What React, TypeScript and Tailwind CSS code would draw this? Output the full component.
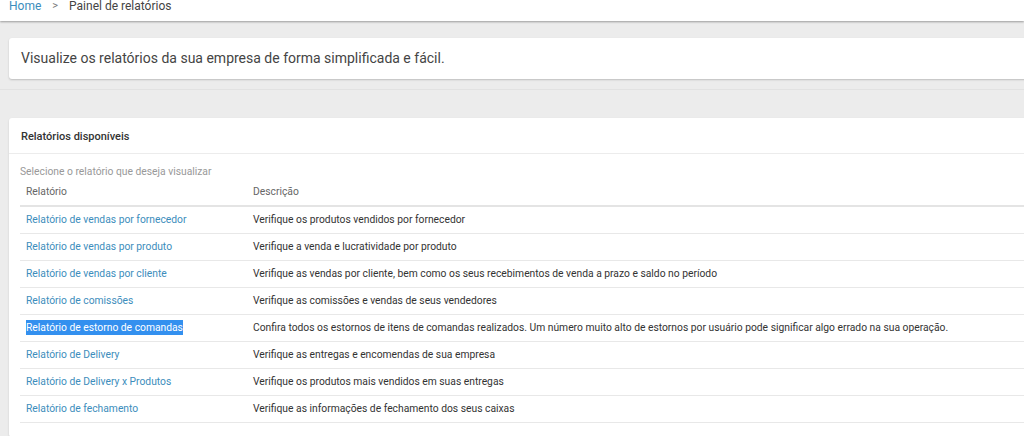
const reports = [
  { name: "Relatório de vendas por fornecedor", desc: "Verifique os produtos vendidos por fornecedor" },
  { name: "Relatório de vendas por produto", desc: "Verifique a venda e lucratividade por produto" },
  { name: "Relatório de vendas por cliente", desc: "Verifique as vendas por cliente, bem como os seus recebimentos de venda a prazo e saldo no período" },
  { name: "Relatório de comissões", desc: "Verifique as comissões e vendas de seus vendedores" },
  {
    name: "Relatório de estorno de comandas",
    desc: "Confira todos os estornos de itens de comandas realizados. Um número muito alto de estornos por usuário pode significar algo errado na sua operação.",
    selected: true,
  },
  { name: "Relatório de Delivery", desc: "Verifique as entregas e encomendas de sua empresa" },
  { name: "Relatório de Delivery x Produtos", desc: "Verifique os produtos mais vendidos em suas entregas" },
  { name: "Relatório de fechamento", desc: "Verifique as informações de fechamento dos seus caixas" },
];

export default function App() {
  return (
    <div className="min-h-[436px] w-[1024px] overflow-hidden bg-[#ececec] font-['Roboto',sans-serif]">
      {/* breadcrumb, scrolled partly out of view */}
      <div className="h-[21px] overflow-hidden bg-white shadow-[0_1px_2px_rgba(0,0,0,0.35)]">
        <div className="-mt-[2px] flex items-center gap-[11px] pl-[9px] text-[12px] leading-[16px]">
          <span className="text-[#3c8dbc]">Home</span>
          <span className="text-[11px] text-[#777]">&gt;</span>
          <span className="text-[#444]">Painel de relatórios</span>
        </div>
      </div>

      <div className="pl-[9px] pt-[17px]">
        <div className="-mr-[20px] flex h-[41px] items-center rounded-[3px] bg-white pl-[12px] text-[14px] text-[#444] shadow-[0_1px_2px_rgba(0,0,0,0.2)]">
          Visualize os relatórios da sua empresa de forma simplificada e fácil.
        </div>

        <div className="-ml-[9px] mt-[10px] h-[29px] border-t border-[#e2e2e2]" />

        <div className="-mr-[20px] rounded-[3px] bg-white shadow-[0_1px_2px_rgba(0,0,0,0.15)]">
          <div className="flex h-[36px] items-center border-b border-[#ececec] pl-[12px] pt-[3px] text-[11px] font-medium text-[#333]">
            Relatórios disponíveis
          </div>
          <div className="pl-[11px] pt-[11px] pb-[14px]">
            <div className="text-[10.3px] leading-[14px] text-[#999]">Selecione o relatório que deseja visualizar</div>
            <table className="w-full border-collapse text-[10.3px]">
              <thead>
                <tr className="h-[27px] border-b-2 border-[#e4e4e4] text-left text-[#666]">
                  <th className="w-[227px] pl-[6px] font-normal">Relatório</th>
                  <th className="pl-[6px] font-normal">Descrição</th>
                </tr>
              </thead>
              <tbody>
                {reports.map((r) => (
                  <tr key={r.name} className="h-[27px] border-b border-[#e8e8e8]">
                    <td className="pl-[6px] text-[#3c8dbc]">
                      {r.selected ? (
                        <span className="bg-[#3390ef] py-[1px] text-white">{r.name}</span>
                      ) : (
                        r.name
                      )}
                    </td>
                    <td className="pl-[6px] text-[#333]">{r.desc}</td>
                  </tr>
                ))}
              </tbody>
            </table>
          </div>
        </div>
      </div>
    </div>
  );
}
